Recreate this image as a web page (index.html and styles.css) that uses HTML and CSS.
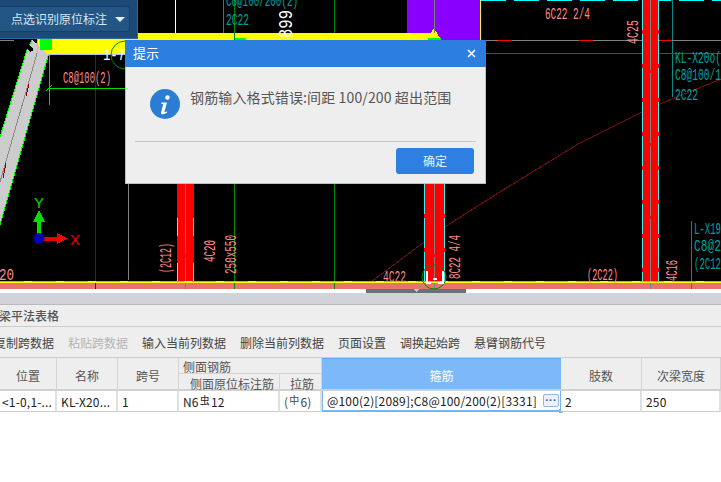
FILE: index.html
```html
<!DOCTYPE html>
<html lang="zh">
<head>
<meta charset="utf-8">
<title>梁平法表格</title>
<link rel="stylesheet" href="styles.css">
</head>
<body>
<main class="app">
  <section class="viewport">
    <svg class="cad" width="721" height="293" viewBox="0 0 721 293">
      <rect class="bg" x="0" y="0" width="721" height="289"/>
      <rect class="purple" x="407" y="0" width="73" height="40"/>
      <path class="yellow-line" d="M480.500 0V40"/>
      <path class="yellow-fill" d="M38 33H431L434 28L437 33L441 40H38Z"/>
      <rect class="yellow-fill" x="38" y="40" width="92" height="14"/>
      <rect class="bright-green" x="234" y="38" width="12" height="2"/>
      <rect class="bright-green" x="428" y="38" width="13" height="2"/>
      <path class="cyan-dash" d="M481 0.500H721"/>
      <path class="white-line" d="M175.500 0V33"/>
      <path class="teal-line" d="M223.500 0V33M672.500 0V97M691.500 221V289"/>
      <path class="dim-green" d="M234.500 0V289M334.500 0V33M334.500 184V289"/>
      <path class="gray-line" d="M0 40.500H14M434.500 0V33M486 40.500H721M128.500 184V280"/>
      <path class="red-line" d="M486 53.500H721M498 40.500H512M579 40.500H593M660 40.500H672"/>
      <path class="dark-red" d="M95.500 54V289"/>
      <path class="curve" d="M363 288L443 228L503 190L578 144L650 108L721 79"/>

      <polygon class="beam" points="32,40 40,46 48,55 0,225 0,137 27,50"/>
      <path class="beam-edge" d="M32 40L27 50L0 137M50 55L48 56L0 225"/>
      <path class="beam-core" d="M38 50L0 182"/>
      <path class="beam-mark" d="M29 84L26 96M6 163L3 178"/>
      <path class="black-mark" d="M28 46L32 51"/>
      <path class="pale-line" d="M37.500 39V54M48 54.500H130"/>
      <rect class="bright-green" x="40" y="39" width="12" height="11"/>

      <path class="bright-line" d="M49.500 55V105M49 88.500H125M46 91L52 85"/>
      <circle class="ring" cx="125" cy="55" r="14"/>
      <text class="cad-text white" x="103" y="60" textLength="22" lengthAdjust="spacingAndGlyphs">1-7</text>

      <g class="column">
        <rect x="177" y="184" width="17" height="97"/>
        <rect x="424" y="184" width="21" height="97"/>
        <rect x="642" y="0" width="17" height="281"/>
      </g>
      <path class="col-side-short" d="M177.500 218V236M177.500 263V281M193.500 218V236M193.500 263V281"/>
      <path class="col-side" d="M424.500 184V281M444.500 184V281M642.500 0V281M658.500 0V281"/>
      <path class="col-center" d="M185.500 184V289M434.500 184V289M650.500 0V289"/>

      <path class="lower" d="M0 282H721"/>
      <path class="lower-dash" d="M0 281.500H721"/>
      <rect class="salmon" x="0" y="283" width="721" height="6"/>
      <path class="dark-red" d="M95.500 283V289"/>
      <path class="dim-green" d="M234.500 283V289M334.500 283V289"/>
      <path class="gray-line" d="M185.500 283V289M434.500 283V289M650.500 283V289"/>
      <path class="teal-line" d="M691.500 283V289"/>
      <rect class="white-band" x="0" y="289" width="721" height="4"/>
      <rect class="scroll" x="366" y="289" width="100" height="4"/>
      <polygon class="scroll-tip" points="413,289 419,289 416,292"/>

      <text class="cad-text teal" x="226" y="6" textLength="72" lengthAdjust="spacingAndGlyphs">C8@100/200(2)</text>
      <text class="cad-text teal" x="226" y="25" textLength="23" lengthAdjust="spacingAndGlyphs">2C22</text>
      <text class="cad-text big white" transform="translate(292 38) rotate(-90)" textLength="28" lengthAdjust="spacingAndGlyphs">899</text>
      <text class="cad-text pink" x="63" y="83" textLength="48" lengthAdjust="spacingAndGlyphs">C8@100(2)</text>
      <text class="cad-text pink" x="545" y="19" textLength="45" lengthAdjust="spacingAndGlyphs">6C22 2/4</text>
      <text class="cad-text pink" transform="translate(638 44) rotate(-90)" textLength="24" lengthAdjust="spacingAndGlyphs">4C25</text>
      <text class="cad-text teal" x="675" y="63" textLength="46" lengthAdjust="spacingAndGlyphs">KL-X20o(</text>
      <text class="cad-text teal" x="675" y="80" textLength="46" lengthAdjust="spacingAndGlyphs">C8@100/1</text>
      <text class="cad-text teal" x="675" y="100" textLength="23" lengthAdjust="spacingAndGlyphs">2C22</text>
      <text class="cad-text teal" x="694" y="234" textLength="27" lengthAdjust="spacingAndGlyphs">L-X19</text>
      <text class="cad-text teal" x="694" y="251" textLength="27" lengthAdjust="spacingAndGlyphs">C8@2</text>
      <text class="cad-text teal" x="694" y="269" textLength="27" lengthAdjust="spacingAndGlyphs">(2C12</text>
      <text class="cad-text pink" x="-1" y="280" textLength="15" lengthAdjust="spacingAndGlyphs">20</text>
      <text class="cad-text pink" transform="translate(171 273) rotate(-90)" textLength="30" lengthAdjust="spacingAndGlyphs">(2C12)</text>
      <text class="cad-text pink" transform="translate(215 262) rotate(-90)" textLength="22" lengthAdjust="spacingAndGlyphs">4C20</text>
      <text class="cad-text pink" transform="translate(236 274) rotate(-90)" textLength="39" lengthAdjust="spacingAndGlyphs">250x550</text>
      <text class="cad-text pink" x="383" y="282" textLength="23" lengthAdjust="spacingAndGlyphs">4C22</text>
      <text class="cad-text pink" transform="translate(460 279) rotate(-90)" textLength="44" lengthAdjust="spacingAndGlyphs">8C22 4/4</text>
      <text class="cad-text pink" x="587" y="280" textLength="31" lengthAdjust="spacingAndGlyphs">(2C22)</text>
      <text class="cad-text pink" transform="translate(677 281) rotate(-90)" textLength="21" lengthAdjust="spacingAndGlyphs">4C16</text>

      <circle class="ring" cx="434" cy="277" r="12"/>
      <path class="bracket" d="M426.500 271V283H431M443 271V283H438M433 278.500H437"/>

      <text class="axis-y" x="34" y="208" textLength="10" lengthAdjust="spacingAndGlyphs">Y</text>
      <path class="axis-y-line" d="M39 236V222"/>
      <polygon class="axis-y-head" points="39,210 45,222 33,222"/>
      <path class="axis-x-line" d="M40 238.500H58"/>
      <polygon class="axis-x-head" points="68,238.500 57,233 57,244"/>
      <circle class="axis-dot" cx="39" cy="238.500" r="5.500"/>
      <text class="axis-x" x="70" y="245" textLength="10" lengthAdjust="spacingAndGlyphs">X</text>
    </svg>

    <div class="recognize">
      <button class="recognize-btn" type="button">
        <span>点选识别原位标注</span>
        <svg class="caret" width="10" height="5" viewBox="0 0 10 5"><polygon points="0,0 10,0 5,5"/></svg>
      </button>
    </div>

    <div class="dialog">
      <header class="dialog-head">
        <span class="dialog-title">提示</span>
        <svg class="close" width="9" height="9" viewBox="0 0 9 9"><path d="M1 1L8 8M8 1L1 8"/></svg>
      </header>
      <div class="dialog-body">
        <svg class="info" width="30" height="30" viewBox="0 0 30 30">
          <circle cx="15" cy="15" r="15"/>
          <circle class="info-mark" cx="17.500" cy="8.500" r="2.200"/>
          <path class="info-mark" d="M11.500 13.500H17L14.500 22.500C14.300 23.300 15 23.500 17 22.300L17.200 23.200C15 25 13 25.600 11.800 25.200C11 24.800 10.900 24 11.200 23L13.200 15.200L11.300 14.800Z"/>
        </svg>
        <p class="message">钢筋输入格式错误:间距 100/200 超出范围</p>
      </div>
      <footer class="dialog-foot">
        <button class="confirm" type="button">确定</button>
      </footer>
    </div>
  </section>

  <div class="splitter"></div>

  <section class="panel">
    <h2 class="panel-title">梁平法表格</h2>
    <nav class="toolbar">
      <span class="tool">复制跨数据</span>
      <span class="tool tool-off">粘贴跨数据</span>
      <span class="tool">输入当前列数据</span>
      <span class="tool">删除当前列数据</span>
      <span class="tool">页面设置</span>
      <span class="tool">调换起始跨</span>
      <span class="tool">悬臂钢筋代号</span>
    </nav>
    <div class="grid">
      <div class="th span-rows">位置</div>
      <div class="th span-rows">名称</div>
      <div class="th span-rows">跨号</div>
      <div class="th group">侧面钢筋</div>
      <div class="th span-rows active-head">箍筋</div>
      <div class="th span-rows">肢数</div>
      <div class="th span-rows">次梁宽度</div>
      <div class="th sub sub-wide">侧面原位标注筋</div>
      <div class="th sub">拉筋</div>
      <div class="td first">&lt;1-0,1-...</div>
      <div class="td">KL-X20...</div>
      <div class="td">1</div>
      <div class="td">N6<span class="rebar">虫</span>12</div>
      <div class="td tie">(<span class="rebar">中</span>6)</div>
      <div class="td active-cell">
        <span class="cell-text">@100(2)[2089];C8@100/200(2)[3331]</span>
        <span class="more">···</span>
        <i class="handle"></i>
      </div>
      <div class="td">2</div>
      <div class="td">250</div>
    </div>
  </section>
</main>
</body>
</html>
```
FILE: styles.css
```css
* { box-sizing: border-box; }
html, body { margin: 0; padding: 0; background: #fff; }
body { width: 721px; height: 482px; overflow: hidden; font-family: "Noto Sans CJK SC", "Liberation Sans", sans-serif; }
.app { display: flex; flex-direction: column; width: 721px; height: 482px; overflow: hidden; }

.viewport { position: relative; height: 293px; flex: none; }
.cad { display: block; }
.cad path, .cad rect, .cad polygon { shape-rendering: crispEdges; }
.bg { fill: #000; }
.purple { fill: #8a00ff; }
.yellow-fill { fill: #ffff00; }
.yellow-line { stroke: #ffff00; fill: none; }
.bright-green { fill: #00ff00; }
.cyan-dash { stroke: #00ffff; stroke-dasharray: 25 8; fill: none; }
.white-line { stroke: #fff; fill: none; }
.teal-line { stroke: #078a8a; fill: none; }
.dim-green { stroke: #008a00; fill: none; }
.gray-line { stroke: #808080; fill: none; }
.red-line { stroke: #f00; fill: none; }
.dark-red { stroke: #7a0a14; fill: none; }
.curve { stroke: #7a0a14; fill: none; }
.beam { fill: #cccccc; }
.beam-edge { stroke: #00ff00; fill: none; stroke-width: 1; }
.beam-core { stroke: #888; fill: none; }
.beam-mark { stroke: #800; fill: none; }
.black-mark { stroke: #000; stroke-width: 4; fill: none; }
.pale-line { stroke: #a8c4e4; fill: none; }
.bright-line { stroke: #00e000; fill: none; }
.ring { fill: none; stroke: #008a00; }
.column { fill: #ff0000; }
.col-side { stroke: #40f0f0; stroke-dasharray: 30 4; fill: none; }
.col-side-short { stroke: #60f0f0; fill: none; }
.col-center { stroke: #808080; fill: none; stroke-dasharray: 70 3; }
.lower { stroke: #ffff00; stroke-width: 2; fill: none; }
.lower-dash { stroke: #20e0e0; stroke-dasharray: 24 8; fill: none; }
.salmon { fill: #e8736c; }
.white-band { fill: #fff; }
.scroll { fill: #6b6f78; }
.scroll-tip { fill: #c8c8cc; }
.bracket { stroke: #fff; stroke-width: 2; fill: none; }

.cad-text { font-family: "Liberation Mono", monospace; font-size: 17px; font-weight: 400; }
.big { font-size: 21px; }
.teal { fill: #00a0a0; }
.pink { fill: #ff8a8a; }
.white { fill: #fff; }
.axis-y { fill: #00e000; font: 14px "Liberation Sans", sans-serif; }
.axis-x { fill: #f00000; font: 14px "Liberation Sans", sans-serif; }
.axis-y-line { stroke: #00e000; stroke-width: 4; fill: none; }
.axis-y-head { fill: #00e000; }
.axis-x-line { stroke: #f00000; stroke-width: 4; fill: none; }
.axis-x-head { fill: #f00000; }
.axis-dot { fill: #0000b0; }

.recognize { position: absolute; left: 0; top: 0; width: 138px; height: 39px; padding: 6px 7px 7px 0; background: #1c4a76; border-right: 1px solid #2f689f; border-bottom: 1px solid #2f689f; }
.recognize-btn { display: flex; align-items: center; justify-content: space-between; width: 100%; height: 26px; padding: 0 4px 0 11px; border: 1px solid #173f66; border-left: 0; border-radius: 0 4px 4px 0; background: #235685; color: #dbe6f0; font: 12px/1 "Noto Sans CJK SC", sans-serif; }
.caret { fill: #e8eef5; flex: none; }

.dialog { position: absolute; left: 125px; top: 40px; width: 361px; height: 144px; display: flex; flex-direction: column; background: #eee; border: 1px solid #b9c0cc; border-top: 0; }
.dialog-head { display: flex; align-items: center; justify-content: space-between; height: 27px; margin: 0 -1px; padding: 0 10px 0 8px; background: #2d7fdf; color: #fff; font-size: 13px; }
.dialog-title { margin-top: -2px; }
.close { stroke: #fff; stroke-width: 1.6; fill: none; }
.dialog-body { display: flex; align-items: flex-start; gap: 10px; height: 75px; margin: 0 9px; padding: 22px 0 0 15px; border-bottom: 1px solid #c8c8c8; }
.info { flex: none; fill: #2a7dd2; }
.info-mark { fill: #fff; }
.message { margin: -2px 0 0; font-size: 14px; line-height: 20px; letter-spacing: 0.13px; color: #555; }
.dialog-foot { display: flex; justify-content: flex-end; padding: 6px 11px 0 0; }
.confirm { width: 78px; height: 26px; padding: 0; border: 0; border-radius: 3px; background: #2d80e2; color: #e8f2ff; font: 12px/1 "Noto Sans CJK SC", sans-serif; }

.splitter { flex: none; height: 12px; background: #d2d3d8; border-bottom: 1px solid #b9bac0; }

.panel { flex: 1; background: #fff; }
.panel-title { height: 22px; margin: 0; background: #eee; border-bottom: 1px solid #ccc; color: #555; font-size: 12px; font-weight: 500; line-height: 21px; text-indent: -1px; white-space: nowrap; }
.toolbar { display: flex; align-items: center; gap: 14px; height: 31px; background: #eee; border-bottom: 1px solid #ccc; overflow: hidden; }
.tool { flex: none; font-size: 12px; color: #444; }
.tool:first-child { margin-left: -6px; }
.tool-off { color: #b5b5b5; }

.grid { display: grid; grid-template-columns: 57px 61px 61px 101px 42px 239px 81px 79px; grid-template-rows: 16px 17px 21px; width: 721px; }
.th { display: flex; align-items: center; justify-content: center; background: #eee; border-right: 1px solid #d4d4d4; border-bottom: 2px solid #d0d0d0; font-size: 12px; color: #555; }
.span-rows { grid-row: span 2; padding-top: 3px; }
.group { grid-column: 4 / span 2; justify-content: flex-start; padding-left: 4px; padding-top: 2px; border-bottom: 1px solid #d4d4d4; }
.sub { padding-top: 3px; padding-left: 3px; }
.sub-wide { padding-left: 6px; }
.active-head { background: #7db8f8; color: #fff; grid-column: 6; grid-row: 1 / span 2; border-right: 0; border-top: 1px solid #68a8ee; }
.td { position: relative; display: flex; align-items: center; padding-left: 4px; background: #fff; border-right: 2px solid #e0e0e0; border-bottom: 1px solid #ccc; font-size: 12px; letter-spacing: 0.18px; color: #222; white-space: nowrap; }
.first { padding-left: 2px; }
.tie { color: #444; }
.rebar { font-size: 10px; padding: 0 1px 3px; }
.active-cell { border-left: 1px solid #7ab3f0; border-right: 1px solid #7ab3f0; border-bottom: 2px solid #7ab3f0; }
.cell-text { flex: none; width: 216px; overflow: hidden; }
.more { display: flex; align-items: center; justify-content: center; width: 16px; height: 13px; border: 1px solid #8fb6e6; border-radius: 2px; background: #eaf2fc; color: #2f5f98; font: bold 11px/1 "Liberation Sans", sans-serif; }
.handle { position: absolute; right: -3px; bottom: -3px; width: 4px; height: 4px; background: #7ab3f0; }
```
